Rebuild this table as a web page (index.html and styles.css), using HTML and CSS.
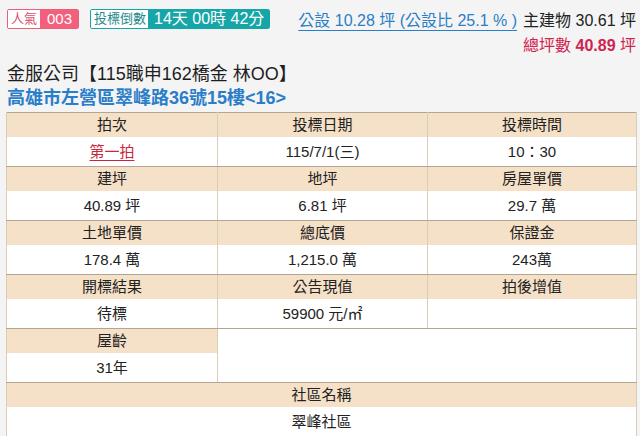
FILE: index.html
```html
<!DOCTYPE html>
<html lang="zh-Hant">
<head>
<meta charset="utf-8">
<link rel="stylesheet" href="styles.css">
</head>
<body>
<div class="top">
  <div class="row1">
    <div class="badges">
      <span class="badge pink"><span class="lab">人氣</span><span class="val">003</span></span>
      <span class="badge teal"><span class="lab">投標倒數</span><span class="val">14天 00時 42分</span></span>
    </div>
    <div class="area">
      <a class="pub">公設 10.28 坪 (公設比 25.1 % )</a>
      <span class="main">主建物 30.61 坪</span>
    </div>
  </div>
  <div class="row2"><span class="total">總坪數 <b>40.89</b> 坪</span></div>
  <h1 class="title">金服公司【115職申162橋金 林OO】</h1>
  <div class="addr">高雄市左營區翠峰路36號15樓&lt;16&gt;</div>
</div>
<table class="info">
  <colgroup><col class="c1"><col class="c2"><col class="c3"></colgroup>
  <tr class="h"><th>拍次</th><th>投標日期</th><th>投標時間</th></tr>
  <tr class="v"><td><span class="round">第一拍</span></td><td>115/7/1(三)</td><td>10：30</td></tr>
  <tr class="h"><th>建坪</th><th>地坪</th><th>房屋單價</th></tr>
  <tr class="v"><td>40.89 坪</td><td>6.81 坪</td><td>29.7 萬</td></tr>
  <tr class="h"><th>土地單價</th><th>總底價</th><th>保證金</th></tr>
  <tr class="v"><td>178.4 萬</td><td>1,215.0 萬</td><td>243萬</td></tr>
  <tr class="h"><th>開標結果</th><th>公告現值</th><th>拍後增值</th></tr>
  <tr class="v"><td>待標</td><td>59900 元/㎡</td><td></td></tr>
  <tr class="h"><th>屋齡</th><td class="blank" colspan="2" rowspan="2"></td></tr>
  <tr class="v"><td>31年</td></tr>
  <tr class="h"><th colspan="3">社區名稱</th></tr>
  <tr class="v last"><td colspan="3">翠峰社區</td></tr>
</table>
</body>
</html>
```
FILE: styles.css
```css
html, body {
  margin: 0;
  padding: 0;
  background: #f4f4f4;
  font-family: "Liberation Sans", "Noto Sans CJK TC", sans-serif;
  color: #222;
}
.top {
  padding: 9px 4px 0 7px;
}
.row1 {
  display: flex;
  justify-content: space-between;
  align-items: center;
  height: 20px;
}
.badges {
  display: flex;
  gap: 11px;
}
.badge {
  display: flex;
  height: 20px;
  box-sizing: border-box;
  border-radius: 2px;
  overflow: hidden;
}
.badge .lab {
  font-size: 13px;
  line-height: 18px;
  padding: 0 3px;
  background: #fff;
}
.badge .val {
  line-height: 20px;
  color: #fff;
  margin: -1px -1px -1px 0;
}
.pink { border: 1px solid #e8607c; }
.pink .lab { color: #d8506c; }
.pink .val { background: #f2607c; font-size: 15px; padding: 0 7px 0 7px; }
.teal { border: 1px solid #16a5a8; }
.teal .lab { color: #268a8c; padding: 0 2px 0 3px; }
.teal .val { background: #17a6a8; font-size: 16px; padding: 0 6px 0 6px; }
.area {
  font-size: 16px;
  display: flex;
  gap: 6px;
  align-items: center;
}
.pub {
  color: #2a7ec8;
  text-decoration: underline;
  text-underline-offset: 4px;
}
.main { color: #222; }
.row2 {
  display: flex;
  justify-content: flex-end;
  margin-top: 7px;
  height: 20px;
}
.total {
  color: #d0234f;
  font-size: 16px;
  line-height: 20px;
}
.total b { font-weight: bold; }
.title {
  margin: 7px 0 0 0;
  font-size: 18px;
  font-weight: normal;
  line-height: 22px;
  color: #1e1e1e;
}
.addr {
  margin-top: 2px;
  color: #2a7ec8;
  font-size: 18px;
  font-weight: bold;
  line-height: 22px;
}
.info {
  margin: 3px 0 0 6px;
  width: 630px;
  border-collapse: collapse;
  background: #fff;
  border: 1px solid #b3a58f;
  font-size: 15px;
  table-layout: fixed;
}
.c1 { width: 211px; }
.c2 { width: 210px; }
.c3 { width: 209px; }
.info th, .info td {
  text-align: center;
  padding: 0;
  border-left: 1px solid #dccdb6;
  border-right: 1px solid #dccdb6;
}
.info th {
  background: #f5e0c8;
  font-weight: normal;
  height: 24px;
  line-height: 24px;
  color: #222;
}
.info tr.v td {
  height: 29px;
  line-height: 29px;
  border-bottom: 1px solid #b3a58f;
  color: #222;
}
.info td.blank {
  background: #fff;
  border-bottom: 1px solid #b3a58f;
}
.info tr.v.last td { border-bottom: none; }
.round {
  color: #c8283c;
  text-decoration: underline;
  text-underline-offset: 3px;
}
```
